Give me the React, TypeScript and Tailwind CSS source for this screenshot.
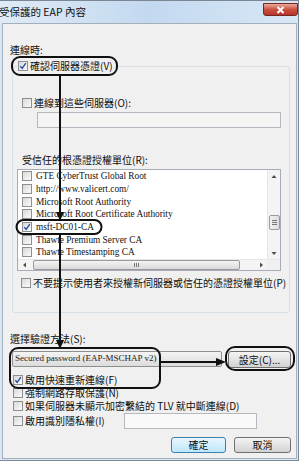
import React from 'react';

const cjk = "font-['Noto_Sans_CJK_TC','Noto_Sans_CJK_SC',sans-serif]";
const serif = "font-['Liberation_Serif',serif]";

const Check: React.FC<{ checked?: boolean }> = ({ checked }) => (
    <span className="relative block w-[10px] h-[10px] shrink-0 border border-[#8e8f8f] bg-linear-to-br from-[#d9d9d9] to-[#fbfbfb]">
        {checked && (
            <svg className="absolute inset-0" width="8" height="8" viewBox="0 0 8 8">
                <path d="M1.3 4.2 L3.2 6.3 L6.8 1.2" fill="none" stroke="#2b4ea8" strokeWidth="1.4" />
            </svg>
        )}
    </span>
);

const Row: React.FC<{ checked?: boolean; label: string; className?: string }> = ({ checked, label, className = '' }) => (
    <div className={`flex items-center h-[12px] gap-[2px] ${className}`}>
        <Check checked={checked} />
        <span className="whitespace-nowrap leading-[12px]">{label}</span>
    </div>
);

const Arrow: React.FC<{ dir: 'up' | 'down' | 'left' | 'right' }> = ({ dir }) => {
    const pts = {
        up: '1.5,5 4,2 6.5,5',
        down: '1.5,3 4,6 6.5,3',
        left: '5,1.5 2,4 5,6.5',
        right: '3,1.5 6,4 3,6.5',
    }[dir];
    return (
        <svg width="8" height="8" viewBox="0 0 8 8">
            <polygon points={pts} fill="#4d4d4d" />
        </svg>
    );
};

const certs = [
    { name: 'GTE CyberTrust Global Root' },
    { name: 'http://www.valicert.com/' },
    { name: 'Microsoft Root Authority' },
    { name: 'Microsoft Root Certificate Authority' },
    { name: 'msft-DC01-CA', checked: true },
    { name: 'Thawte Premium Server CA' },
    { name: 'Thawte Timestamping CA' },
];

const App: React.FC = () => {
    return (
        <div className={`relative w-[300px] h-[465px] bg-white overflow-hidden text-[10px] text-[#0d0d0d] ${cjk}`}>
            {/* window frame */}
            <div className="w-[299px] h-[461px] flex flex-col border-t border-r border-b border-[#7b8794] bg-[#d9e6f3]">
                <div className="h-[22px] flex items-start bg-linear-to-r from-[#dfeaf6] via-[#c3d9f0] to-[#d8e7f6]">
                    <span className="mt-[5px] ml-[-1px] text-[10.5px] leading-[12px] text-[#111] whitespace-nowrap">受保護的 EAP 內容</span>
                    <div className="ml-auto mt-[2px] w-[35px] h-[13px] flex items-center justify-center rounded-b-[3px] border border-[#6e2a22] bg-linear-to-b from-[#e9a99c] via-[#c9513f] to-[#b8342b]">
                        <svg width="9" height="8" viewBox="0 0 9 8">
                            <path d="M1.5 1 L7.5 7 M7.5 1 L1.5 7" stroke="#fff" strokeWidth="2" />
                        </svg>
                    </div>
                </div>

                {/* body */}
                <div className="flex-1 ml-[2px] mr-[1px] mb-[1px] border border-[#a3afbb] bg-[#f0f0f0] pl-[7px] pt-[20px]">
                    <div className="leading-[12px] h-[12px]">連線時:</div>

                    <fieldset className="ml-[2px] mt-[4px] w-[278px] border border-[#d5dfe5] rounded-[3px] pl-[4px] pb-[23px]">
                        <legend className="px-[1px]">
                            <Row checked label="確認伺服器憑證(V)" />
                        </legend>

                        <Row label="連線到這些伺服器(O):" className="mt-[25px] ml-[5px]" />
                        <div className="mt-[3px] ml-[20px] w-[244px] h-[16px] border border-[#b5b9bf] bg-[#f4f4f4]" />

                        <div className="mt-[26px] ml-[5px] h-[12px] leading-[12px]">受信任的根憑證授權單位(R):</div>

                        <div className="mt-[3px] w-[264px] h-[102px] flex flex-col border border-[#a5acb5] bg-white">
                            <div className="flex h-[89px]">
                                <div className={`flex-1 pl-[4px] ${serif} text-[9.3px]`}>
                                    {certs.map((c) => (
                                        <div key={c.name} className="flex items-center gap-[4px] h-[12.7px]">
                                            <Check checked={c.checked} />
                                            <span className="whitespace-nowrap leading-[12px] text-[#111]">{c.name}</span>
                                        </div>
                                    ))}
                                </div>
                                <div className="w-[13px] flex flex-col items-center bg-[#f4f4f4] border-l border-[#e6e6e6]">
                                    <div className="h-[13px] flex items-center justify-center">
                                        <Arrow dir="up" />
                                    </div>
                                    <div className="mt-[32px] w-[11px] h-[15px] flex flex-col items-center justify-center gap-[1px] rounded-[2px] border border-[#9a9a9a] bg-linear-to-r from-[#f3f3f3] to-[#dcdcdc]">
                                        <span className="block w-[5px] h-px bg-[#777]" />
                                        <span className="block w-[5px] h-px bg-[#777]" />
                                        <span className="block w-[5px] h-px bg-[#777]" />
                                    </div>
                                    <div className="mt-auto h-[13px] flex items-center justify-center">
                                        <Arrow dir="down" />
                                    </div>
                                </div>
                            </div>
                            <div className="flex h-[11px] bg-[#f4f4f4] border-t border-[#e6e6e6]">
                                <div className="w-[13px] flex items-center justify-center">
                                    <Arrow dir="left" />
                                </div>
                                <div className="ml-[2px] w-[207px] h-[10px] flex items-center justify-center gap-[1px] rounded-[2px] border border-[#9a9a9a] bg-linear-to-b from-[#f3f3f3] to-[#dadada]">
                                    <span className="block w-px h-[4px] bg-[#777]" />
                                    <span className="block w-px h-[4px] bg-[#777]" />
                                    <span className="block w-px h-[4px] bg-[#777]" />
                                </div>
                                <div className="ml-auto w-[13px] flex items-center justify-center">
                                    <Arrow dir="right" />
                                </div>
                                <div className="w-[13px] bg-[#f0f0f0]" />
                            </div>
                        </div>

                        <Row label="不要提示使用者來授權新伺服器或信任的憑證授權單位(P)" className="mt-[6px] ml-[4px]" />
                    </fieldset>

                    <div className="mt-[20px] h-[12px] leading-[12px]">選擇驗證方法(S):</div>

                    <div className="mt-[6px] flex items-start">
                        <div className={`ml-[2px] w-[210px] h-[16px] flex items-center pl-[2px] rounded-[2px] border border-[#8e8f8f] bg-linear-to-b from-[#f4f4f4] to-[#dcdcdc] ${serif} text-[9px] text-[#222] whitespace-nowrap`}>
                            Secured password (EAP-MSCHAP v2)
                        </div>
                        <button className="ml-[6px] w-[63px] h-[17px] flex items-center justify-center rounded-[3px] border border-[#707070] bg-linear-to-b from-[#f4f4f4] to-[#d3d3d3] text-[10px] leading-[12px]">
                            設定(C)...
                        </button>
                    </div>

                    <Row checked label="啟用快速重新連線(F)" className="mt-[6px] ml-[3px]" />
                    <Row label="強制網路存取保護(N)" className="mt-[1px] ml-[3px]" />
                    <Row label="如果伺服器未顯示加密繫結的 TLV 就中斷連線(D)" className="mt-[1px] ml-[3px]" />
                    <div className="mt-[1px] flex items-center h-[16px]">
                        <Row label="啟用識別隱私權(I)" className="ml-[3px] w-[111px]" />
                        <div className="w-[133px] h-[16px] border border-[#b5b9bf] bg-[#f9f9f9]" />
                    </div>

                    <div className="mt-[8px] mr-[5px] flex justify-end gap-[8px]">
                        <button className="w-[55px] h-[16px] flex items-center justify-center rounded-[3px] border border-[#3c7fb1] bg-linear-to-b from-[#eaf6fd] to-[#bee6fd] leading-[12px]">
                            確定
                        </button>
                        <button className="w-[57px] h-[16px] flex items-center justify-center rounded-[3px] border border-[#707070] bg-linear-to-b from-[#f4f4f4] to-[#d3d3d3] leading-[12px]">
                            取消
                        </button>
                    </div>
                </div>
            </div>

            {/* callout annotations */}
            <svg className="absolute inset-0 pointer-events-none" width="300" height="465" viewBox="0 0 300 465">
                <g fill="none" stroke="#111" strokeWidth="2">
                    <rect x="12" y="57" width="105" height="18" rx="8" />
                    <line x1="60" y1="75" x2="60" y2="214" />
                    <rect x="16.5" y="220" width="85" height="14" rx="7" />
                    <line x1="60" y1="234" x2="60" y2="342" />
                    <rect x="10" y="348" width="150" height="40" rx="8" />
                    <line x1="160" y1="362" x2="218" y2="362" />
                    <rect x="226" y="347" width="68" height="23" rx="9" />
                </g>
                <g fill="#111">
                    <polygon points="56,212 64,212 60,221" />
                    <polygon points="56,340 64,340 60,349" />
                    <polygon points="216,358 216,366 226,362" />
                </g>
            </svg>
        </div>
    );
};

export default App;
